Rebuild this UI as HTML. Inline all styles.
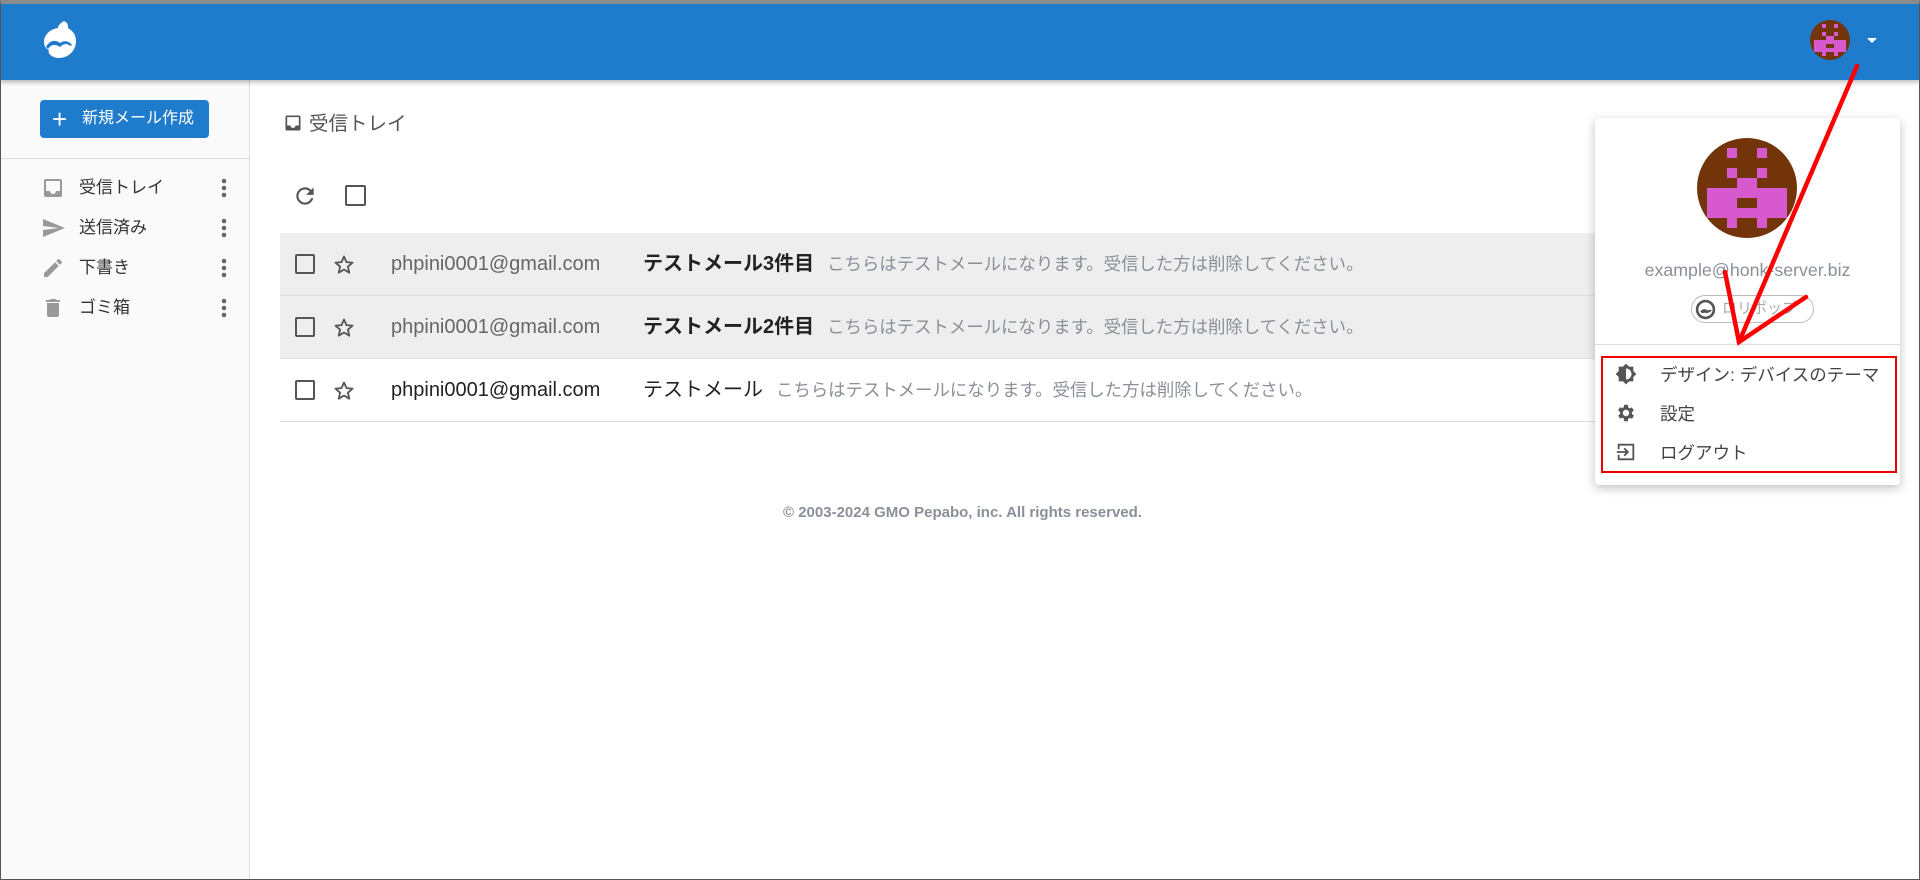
<!DOCTYPE html>
<html><head><meta charset="utf-8"><style>
*{box-sizing:border-box;margin:0;padding:0}
body{width:1920px;height:880px;overflow:hidden;background:#fff;font-family:"Liberation Sans","Noto Sans CJK JP",sans-serif;position:relative;color:#333}
.frame{position:absolute;inset:0;border:1px solid #555;border-top:4px solid #8c8c8c;pointer-events:none;z-index:50}
.hdr{position:absolute;left:0;top:0;width:1920px;height:80px;background:#1f7bcb;box-shadow:0 2px 5px rgba(0,0,0,.3);z-index:5}
.side{position:absolute;left:0;top:80px;width:250px;height:800px;background:#fafafa;border-right:1px solid #ddd}
.btn{position:absolute;left:40px;top:100px;width:169px;height:38px;background:#1f7bcb;border-radius:4px;color:#fff;font-size:16px;line-height:38px;padding-left:42px}
.btn span{position:absolute;left:12px;top:0;font-size:26px;font-weight:300}
.div1{position:absolute;left:0;top:158px;width:250px;border-top:1px solid #ddd}
.nav{position:absolute;left:0;width:250px;height:40px;font-size:17px;color:#333;line-height:40px}
.nav svg.i{position:absolute;left:41px;top:8px}
.nav .t{position:absolute;left:79px}
.nav .k{position:absolute;left:221px;top:10px}
.t1{position:absolute;left:283px;top:111px;font-size:19.5px;color:#555;line-height:26px}
.row{position:absolute;left:280px;width:1620px;height:63px;border-bottom:1px solid #ddd;font-size:20px;line-height:63px}
.row.g{background:#eee}
.row .cb{position:absolute;left:15px;top:21px;width:20px;height:20px;border:2.5px solid #555;border-radius:2px}
.row svg{position:absolute;left:52px;top:20px}
.row .em{position:absolute;left:111px;color:#666}
.row .sb{position:absolute;left:363px;color:#222}
.row .pv{color:#8a8f98;font-size:17.4px;font-weight:normal;margin-left:13px}
.foot{position:absolute;left:783px;top:504px;font-size:15px;font-weight:bold;color:#8a8f98}
.dd{position:absolute;left:1595px;top:118px;width:305px;height:367px;background:#fff;border-radius:4px;box-shadow:0 3px 10px rgba(0,0,0,.25);z-index:10}
.mi{position:absolute;left:0;width:305px;font-size:17.5px;color:#444}
</style></head><body>
<div class="hdr">
<svg style="position:absolute;left:42px;top:20px" width="36" height="40" viewBox="0 0 36 40"><path d="M22 1c-3 2-6 4-6 7C8 9 2 15 2 22c0 4 2 7 5 8-2 3 3 8 10 8 9 0 17-7 17-17 0-6-3-10-8-13 0-3 0-5-4-7z" fill="#fff"/><path d="M4 27c3-6 9-8 14-4 4-3 9-2 12 2-1 1-2 1-3 0-3-2-6-1-9 2-4-3-9-3-12 2z" fill="#1f7bcb"/></svg>
<svg style="position:absolute;left:1810px;top:20px" width="40" height="40" viewBox="0 0 100 100"><circle cx="50" cy="50" r="50" fill="#73340a"/><g fill="#d65acd"><rect x="30" y="10" width="10" height="10"/><rect x="60" y="10" width="10" height="10"/><rect x="30" y="30" width="10" height="10"/><rect x="60" y="30" width="10" height="10"/><rect x="40" y="40" width="20" height="10"/><path d="M10 50h80v30H10zM40 60v10h20V60z" fill-rule="evenodd"/><rect x="30" y="80" width="10" height="10"/><rect x="60" y="80" width="10" height="10"/></g></svg>
<div style="position:absolute;left:1867px;top:38px;border-left:5px solid transparent;border-right:5px solid transparent;border-top:5px solid #fff"></div>
</div>
<div class="side">
</div>
<div class="btn"><span>+</span>新規メール作成</div>
<div class="div1"></div>
<div class="nav" style="top:168px"><svg class="i" width="24" height="24" viewBox="0 0 24 24"><path d="M19 3H5a2 2 0 0 0-2 2v14a2 2 0 0 0 2 2h14a2 2 0 0 0 2-2V5a2 2 0 0 0-2-2zm0 12h-4a3 3 0 0 1-6 0H5V5h14z" fill="#999"/></svg><span class="t">受信トレイ</span><svg class="k" width="6" height="20"><circle cx="3" cy="3" r="2.3" fill="#666"/><circle cx="3" cy="10" r="2.3" fill="#666"/><circle cx="3" cy="17" r="2.3" fill="#666"/></svg></div>
<div class="nav" style="top:208px"><svg class="i" width="26" height="24" viewBox="0 0 24 24"><path d="M1 21l22-9L1 3v7l16 2-16 2z" fill="#999"/></svg><span class="t">送信済み</span><svg class="k" width="6" height="20"><circle cx="3" cy="3" r="2.3" fill="#666"/><circle cx="3" cy="10" r="2.3" fill="#666"/><circle cx="3" cy="17" r="2.3" fill="#666"/></svg></div>
<div class="nav" style="top:248px"><svg class="i" width="24" height="24" viewBox="0 0 24 24"><path d="M3 17.3V21h3.7L17.8 9.9l-3.7-3.7zM20.7 7a1 1 0 0 0 0-1.4l-2.3-2.3a1 1 0 0 0-1.4 0l-1.8 1.8 3.7 3.7z" fill="#999"/></svg><span class="t">下書き</span><svg class="k" width="6" height="20"><circle cx="3" cy="3" r="2.3" fill="#666"/><circle cx="3" cy="10" r="2.3" fill="#666"/><circle cx="3" cy="17" r="2.3" fill="#666"/></svg></div>
<div class="nav" style="top:288px"><svg class="i" width="24" height="24" viewBox="0 0 24 24"><path d="M6 19a2 2 0 0 0 2 2h8a2 2 0 0 0 2-2V7H6zM19 4h-3.5l-1-1h-5l-1 1H5v2h14z" fill="#999"/></svg><span class="t">ゴミ箱</span><svg class="k" width="6" height="20"><circle cx="3" cy="3" r="2.3" fill="#666"/><circle cx="3" cy="10" r="2.3" fill="#666"/><circle cx="3" cy="17" r="2.3" fill="#666"/></svg></div>

<div class="t1"><svg style="vertical-align:-3px;margin-right:6px" width="20" height="20" viewBox="0 0 24 24"><path d="M19 3H5a2 2 0 0 0-2 2v14a2 2 0 0 0 2 2h14a2 2 0 0 0 2-2V5a2 2 0 0 0-2-2zm0 12h-4a3 3 0 0 1-6 0H5V5h14z" fill="#555"/></svg>受信トレイ</div>
<svg style="position:absolute;left:292px;top:183px" width="26" height="26" viewBox="0 0 24 24"><path d="M17.65 6.35A8 8 0 1 0 19.7 14h-2.1A6 6 0 1 1 12 6c1.66 0 3.14.69 4.22 1.78L13 11h7V4z" fill="#555"/></svg>
<div style="position:absolute;left:345px;top:185px;width:21px;height:21px;border:2.5px solid #555;border-radius:2px"></div>

<div class="row g" style="top:233px"><div class="cb"></div><svg width="24" height="24" viewBox="0 0 24 24"><path d="M12 3.5l2.5 5.6 6 .6-4.6 4 1.4 6-5.3-3.2-5.3 3.2 1.4-6-4.6-4 6-.6z" fill="none" stroke="#555" stroke-width="1.8" stroke-linejoin="round"/></svg><span class="em">phpini0001@gmail.com</span><span class="sb"><b>テストメール3件目</b><span class="pv">こちらはテストメールになります。受信した方は削除してください。</span></span></div>
<div class="row g" style="top:296px"><div class="cb"></div><svg width="24" height="24" viewBox="0 0 24 24"><path d="M12 3.5l2.5 5.6 6 .6-4.6 4 1.4 6-5.3-3.2-5.3 3.2 1.4-6-4.6-4 6-.6z" fill="none" stroke="#555" stroke-width="1.8" stroke-linejoin="round"/></svg><span class="em">phpini0001@gmail.com</span><span class="sb"><b>テストメール2件目</b><span class="pv">こちらはテストメールになります。受信した方は削除してください。</span></span></div>
<div class="row" style="top:359px"><div class="cb"></div><svg width="24" height="24" viewBox="0 0 24 24"><path d="M12 3.5l2.5 5.6 6 .6-4.6 4 1.4 6-5.3-3.2-5.3 3.2 1.4-6-4.6-4 6-.6z" fill="none" stroke="#555" stroke-width="1.8" stroke-linejoin="round"/></svg><span class="em" style="color:#222">phpini0001@gmail.com</span><span class="sb">テストメール<span class="pv">こちらはテストメールになります。受信した方は削除してください。</span></span></div>
<div class="foot">© 2003-2024 GMO Pepabo, inc. All rights reserved.</div>

<div class="dd">
<svg style="position:absolute;left:102px;top:20px" width="100" height="100" viewBox="0 0 100 100"><circle cx="50" cy="50" r="50" fill="#73340a"/><g fill="#d65acd"><rect x="30" y="10" width="10" height="10"/><rect x="60" y="10" width="10" height="10"/><rect x="30" y="30" width="10" height="10"/><rect x="60" y="30" width="10" height="10"/><rect x="40" y="40" width="20" height="10"/><path d="M10 50h80v30H10zM40 60v10h20V60z" fill-rule="evenodd"/><rect x="30" y="80" width="10" height="10"/><rect x="60" y="80" width="10" height="10"/></g></svg>
<div style="position:absolute;left:0;width:305px;top:142px;text-align:center;font-size:17.8px;color:#8a8f98">example@honk-server.biz</div>
<div style="position:absolute;left:96px;top:177px;width:123px;height:28px;border:1px solid #bbb;border-radius:14px;font-size:15px;color:#aaa;line-height:26px;padding-left:30px">ロリポップ<svg style="position:absolute;left:3px;top:3px" width="21" height="21" viewBox="0 0 20 20"><circle cx="10" cy="10" r="8" fill="none" stroke="#555" stroke-width="2.5"/><path d="M5 12c2-3 5-3 7-1 2-1 3-1 4 0-2 2-5 3-7 2-2 1-3 0-4-1z" fill="#555"/></svg></div>
<div style="position:absolute;left:0;top:226px;width:305px;border-top:1px solid #ddd"></div>
<div style="position:absolute;left:6px;top:238px;width:296px;height:117px;border:2px solid #e00"></div>
<div class="mi" style="top:244px"><svg style="position:absolute;left:20px;top:1px" width="22" height="22" viewBox="0 0 24 24"><path d="M20 8.7V4h-4.7L12 .7 8.7 4H4v4.7L.7 12 4 15.3V20h4.7l3.3 3.3 3.3-3.3H20v-4.7l3.3-3.3zM12 18V6a6 6 0 0 1 0 12z" fill="#555"/><path d="M12 6a6 6 0 0 1 0 12 5 5 0 0 0 0-12z" fill="#fff"/></svg><span style="position:absolute;left:65px">デザイン: デバイスのテーマ</span></div>
<div class="mi" style="top:283px"><svg style="position:absolute;left:20px;top:1px" width="22" height="22" viewBox="0 0 24 24"><path d="M19.4 13a7.5 7.5 0 0 0 0-2l2.1-1.6-2-3.5-2.5 1a7 7 0 0 0-1.7-1L15 3h-4l-.4 2.7a7 7 0 0 0-1.7 1l-2.5-1-2 3.5L6.6 11a7.5 7.5 0 0 0 0 2l-2.1 1.6 2 3.5 2.5-1a7 7 0 0 0 1.7 1L11 21h4l.4-2.7a7 7 0 0 0 1.7-1l2.5 1 2-3.5zM13 15.5a3.5 3.5 0 1 1 0-7 3.5 3.5 0 0 1 0 7z" fill="#555" transform="translate(-1 0)"/></svg><span style="position:absolute;left:65px">設定</span></div>
<div class="mi" style="top:322px"><svg style="position:absolute;left:20px;top:1px" width="22" height="22" viewBox="0 0 24 24"><path d="M4 9V4h16v16H4v-5M2 12h12M10 8l4 4-4 4" fill="none" stroke="#555" stroke-width="2"/></svg><span style="position:absolute;left:65px">ログアウト</span></div>
</div>
<svg style="position:absolute;left:0;top:0;z-index:20" width="1920" height="880"><g stroke="#f00" stroke-width="4.5" fill="none" stroke-linecap="round"><path d="M1857 66L1739 342"/><path d="M1725 272L1739 342L1806 297"/></g></svg>
<div class="frame"></div>
</body></html>
